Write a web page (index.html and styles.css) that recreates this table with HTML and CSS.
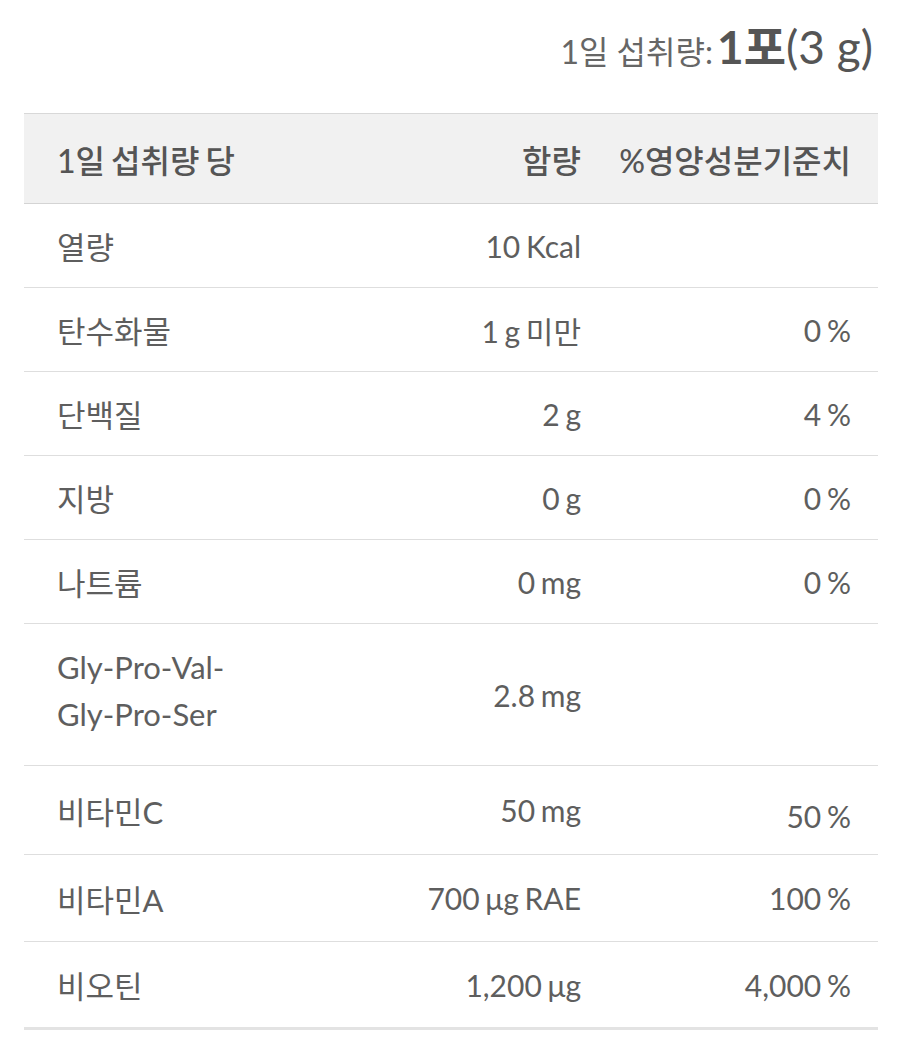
FILE: index.html
```html
<!DOCTYPE html>
<html lang="ko">
<head>
<meta charset="utf-8">
<link rel="stylesheet" href="styles.css">
</head>
<body>
<div class="page">
  <div class="serving"><span class="serving-label">1일 섭취량:</span> <span class="serving-value"><b>1포</b>(3 g)</span></div>
  <table class="nutri">
    <thead>
      <tr class="head">
        <th class="c-name">1일 섭취량 당</th>
        <th class="c-amt">함량</th>
        <th class="c-pct">%영양성분기준치</th>
      </tr>
    </thead>
    <tbody>
      <tr><td class="c-name">열량</td><td class="c-amt">10 Kcal</td><td class="c-pct"></td></tr>
      <tr><td class="c-name">탄수화물</td><td class="c-amt">1 g 미만</td><td class="c-pct">0 %</td></tr>
      <tr><td class="c-name">단백질</td><td class="c-amt">2 g</td><td class="c-pct">4 %</td></tr>
      <tr><td class="c-name">지방</td><td class="c-amt">0 g</td><td class="c-pct">0 %</td></tr>
      <tr><td class="c-name">나트륨</td><td class="c-amt">0 mg</td><td class="c-pct">0 %</td></tr>
      <tr class="tall"><td class="c-name two">Gly-Pro-Val-<br>Gly-Pro-Ser</td><td class="c-amt">2.8 mg</td><td class="c-pct"></td></tr>
      <tr class="mid"><td class="c-name">비타민C</td><td class="c-amt">50 mg</td><td class="c-pct low">50 %</td></tr>
      <tr class="mid2"><td class="c-name">비타민A</td><td class="c-amt">700 μg RAE</td><td class="c-pct">100 %</td></tr>
      <tr class="mid2 last"><td class="c-name">비오틴</td><td class="c-amt">1,200 μg</td><td class="c-pct">4,000 %</td></tr>
    </tbody>
  </table>
</div>
</body>
</html>
```

FILE: styles.css
```css
html, body {
  margin: 0;
  padding: 0;
  background: #fff;
}
body {
  font-family: Lato, "Noto Sans CJK KR", sans-serif;
  color: #5e5e5e;
}
.page {
  padding: 0 24px;
}
.serving {
  text-align: right;
  padding: 11px 5px 0 0;
  height: 113px;
  box-sizing: border-box;
  color: #666;
  white-space: nowrap;
}
.serving-label {
  font-size: 32px;
}
.serving-value {
  font-size: 46px;
  color: #555;
}
.serving-value b {
  font-weight: 700;
}
.nutri {
  width: 100%;
  border-collapse: collapse;
  font-size: 30px;
  word-spacing: -2px;
}
.nutri th, .nutri td {
  padding: 0;
  border-bottom: 1px solid #dedede;
  vertical-align: middle;
}
.nutri thead tr {
  background: #f1f1f1;
  height: 90px;
  border-top: 1px solid #d8d8d8;
}
.nutri th {
  font-weight: 500;
  font-size: 32px;
  color: #555;
  border-bottom-color: #d4d4d4;
}
.nutri tbody tr {
  height: 84px;
}
.nutri tbody tr.tall {
  height: 142px;
}
.nutri tbody tr.mid {
  height: 89px;
}
.nutri tbody tr.mid2 {
  height: 87px;
}
.nutri tr.last td {
  border-bottom: 3px solid #e3e3e3;
}
.c-name {
  text-align: left;
  padding-left: 33px !important;
  width: 270px;
}
.nutri td.c-name {
  font-size: 31px;
}
.c-amt {
  text-align: right;
}
.c-pct {
  text-align: right;
  padding-right: 27px !important;
  width: 270px;
}
.two {
  line-height: 47px;
  padding-bottom: 8px !important;
}
.low {
  padding-top: 12px !important;
}
```
